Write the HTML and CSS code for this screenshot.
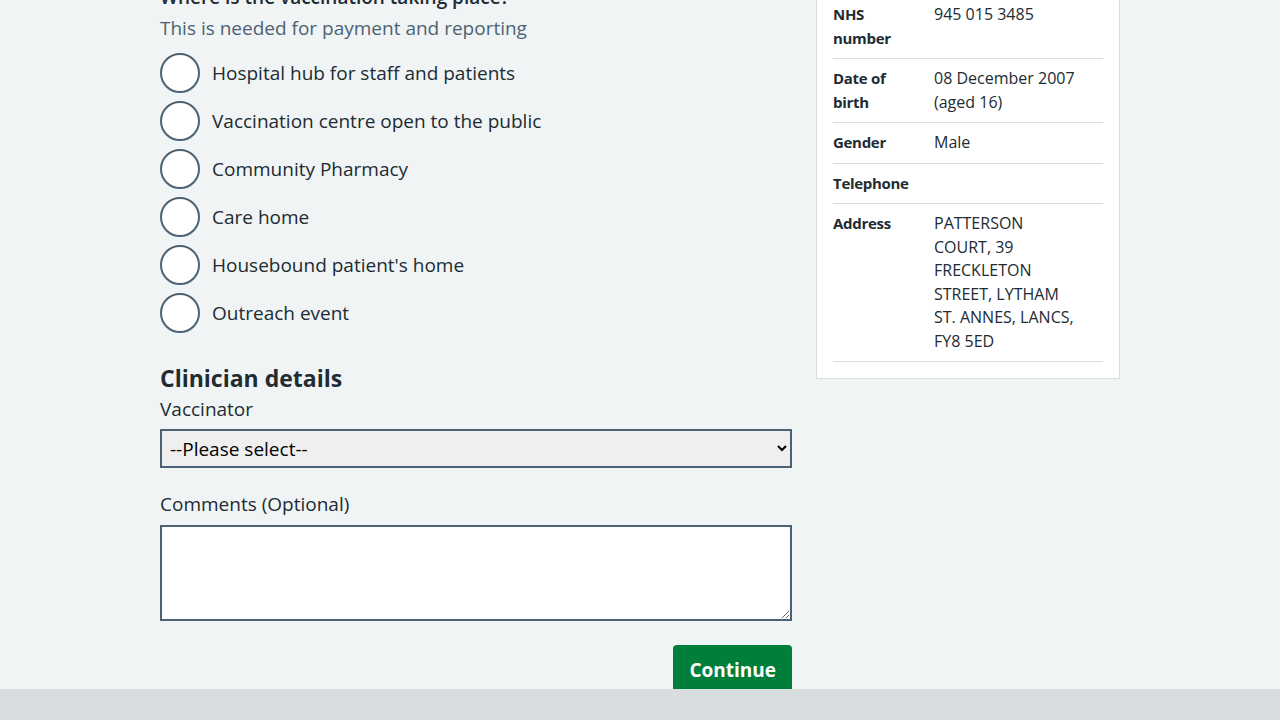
FILE: index.html
```html
<!DOCTYPE html>
<html lang="en">
<head>
<meta charset="utf-8">
<title>Record vaccination</title>
<link rel="stylesheet" href="styles.css">
</head>
<body>
<main class="page">
  <div class="main-col">
    <fieldset class="fieldset">
      <legend class="legend">Where is the vaccination taking place?</legend>
      <div class="hint">This is needed for payment and reporting</div>
      <div class="radios">
        <label class="radio"><input type="radio" name="location"><span class="radio-mark"></span><span class="radio-label">Hospital hub for staff and patients</span></label>
        <label class="radio"><input type="radio" name="location"><span class="radio-mark"></span><span class="radio-label">Vaccination centre open to the public</span></label>
        <label class="radio"><input type="radio" name="location"><span class="radio-mark"></span><span class="radio-label">Community Pharmacy</span></label>
        <label class="radio"><input type="radio" name="location"><span class="radio-mark"></span><span class="radio-label">Care home</span></label>
        <label class="radio"><input type="radio" name="location"><span class="radio-mark"></span><span class="radio-label">Housebound patient's home</span></label>
        <label class="radio"><input type="radio" name="location"><span class="radio-mark"></span><span class="radio-label">Outreach event</span></label>
      </div>
    </fieldset>

    <h2 class="section-title">Clinician details</h2>
    <label class="field-label" for="vaccinator">Vaccinator</label>
    <select class="select" id="vaccinator">
      <option>--Please select--</option>
    </select>

    <label class="field-label comments-label" for="comments">Comments (Optional)</label>
    <textarea class="textarea" id="comments"></textarea>

    <div class="actions">
      <button class="button" type="button">Continue</button>
    </div>
  </div>

  <aside class="side-col">
    <div class="card">
      <dl class="summary">
        <div class="summary-row">
          <dt>NHS number</dt>
          <dd>945 015 3485</dd>
        </div>
        <div class="summary-row">
          <dt>Date of birth</dt>
          <dd>08 December 2007 (aged 16)</dd>
        </div>
        <div class="summary-row">
          <dt>Gender</dt>
          <dd>Male</dd>
        </div>
        <div class="summary-row">
          <dt>Telephone</dt>
          <dd></dd>
        </div>
        <div class="summary-row">
          <dt>Address</dt>
          <dd>PATTERSON COURT, 39 FRECKLETON STREET, LYTHAM ST. ANNES, LANCS, FY8 5ED</dd>
        </div>
      </dl>
    </div>
  </aside>
</main>
<footer class="footer-bar"></footer>
</body>
</html>
```

FILE: styles.css
```css
* { box-sizing: border-box; }

html, body {
  margin: 0;
  padding: 0;
  background: #f0f4f5;
  color: #212b32;
  font-family: "Open Sans", "Noto Sans", "Liberation Sans", sans-serif;
  overflow: hidden;
}

.page {
  width: 960px;
  margin: -17px auto 0;
  display: flex;
  align-items: flex-start;
  gap: 24px;
}

.main-col {
  width: 632px;
  flex: none;
}

.side-col {
  width: 304px;
  flex: none;
  margin-top: -5px;
}

.fieldset {
  border: 0;
  margin: 0;
  padding: 0;
  min-width: 0;
}

.legend {
  padding: 0;
  font-size: 19px;
  line-height: 28px;
  font-weight: 600;
  margin-bottom: 3px;
}

.hint {
  font-size: 19px;
  line-height: 28px;
  color: #4c6272;
  margin-bottom: 11px;
}

.radios {
  display: flex;
  flex-direction: column;
  gap: 8px;
}

.radio {
  display: flex;
  align-items: center;
  gap: 12px;
  height: 40px;
  cursor: pointer;
}

.radio input {
  position: absolute;
  opacity: 0;
  width: 0;
  height: 0;
}

.radio-mark {
  width: 40px;
  height: 40px;
  flex: none;
  border: 2px solid #4c6272;
  border-radius: 50%;
  background: #ffffff;
}

.radio-label {
  font-size: 19px;
  line-height: 28px;
}

.section-title {
  margin: 29px 0 0;
  font-size: 23px;
  line-height: 32px;
  font-weight: 700;
}

.field-label {
  display: block;
  margin-top: 3px;
  font-size: 19px;
  line-height: 24px;
}

.comments-label {
  margin-top: 24px;
}

.select {
  display: block;
  width: 100%;
  height: 39px;
  margin-top: 8px;
  padding: 0 6px 0 4px;
  font-family: "Open Sans", "Noto Sans", sans-serif;
  font-size: 19px;
  color: #000000;
  background-color: #efefef;
  border: 2px solid #4c6272;
  border-radius: 0;
}

.textarea {
  display: block;
  width: 100%;
  height: 96px;
  margin-top: 9px;
  padding: 4px;
  font-family: inherit;
  font-size: 19px;
  background: #ffffff;
  border: 2px solid #4c6272;
  border-radius: 0;
}

.actions {
  display: flex;
  justify-content: flex-end;
  margin-top: 24px;
}

.button {
  font-family: inherit;
  font-size: 19px;
  line-height: 26px;
  font-weight: 700;
  color: #ffffff;
  background: #007f3b;
  border: 0;
  border-radius: 4px;
  padding: 12px 16px;
  box-shadow: 0 4px 0 #00401e;
  cursor: pointer;
}

.card {
  background: #ffffff;
  border: 1px solid #d8dde0;
  padding: 16px;
}

.summary {
  margin: 0;
  font-size: 16px;
  line-height: 23.5px;
}

.summary-row {
  display: flex;
  padding: 8px 0;
  border-bottom: 1px solid #d8dde0;
}

.summary-row dt {
  width: 101px;
  flex: none;
  padding-right: 16px;
  font-weight: 700;
  font-size: 15px;
  letter-spacing: -0.3px;
}

.summary-row dd {
  margin: 0;
  width: 145px;
}

.footer-bar {
  position: fixed;
  left: 0;
  right: 0;
  bottom: 0;
  height: 31px;
  background: #d8dde0;
}
```
